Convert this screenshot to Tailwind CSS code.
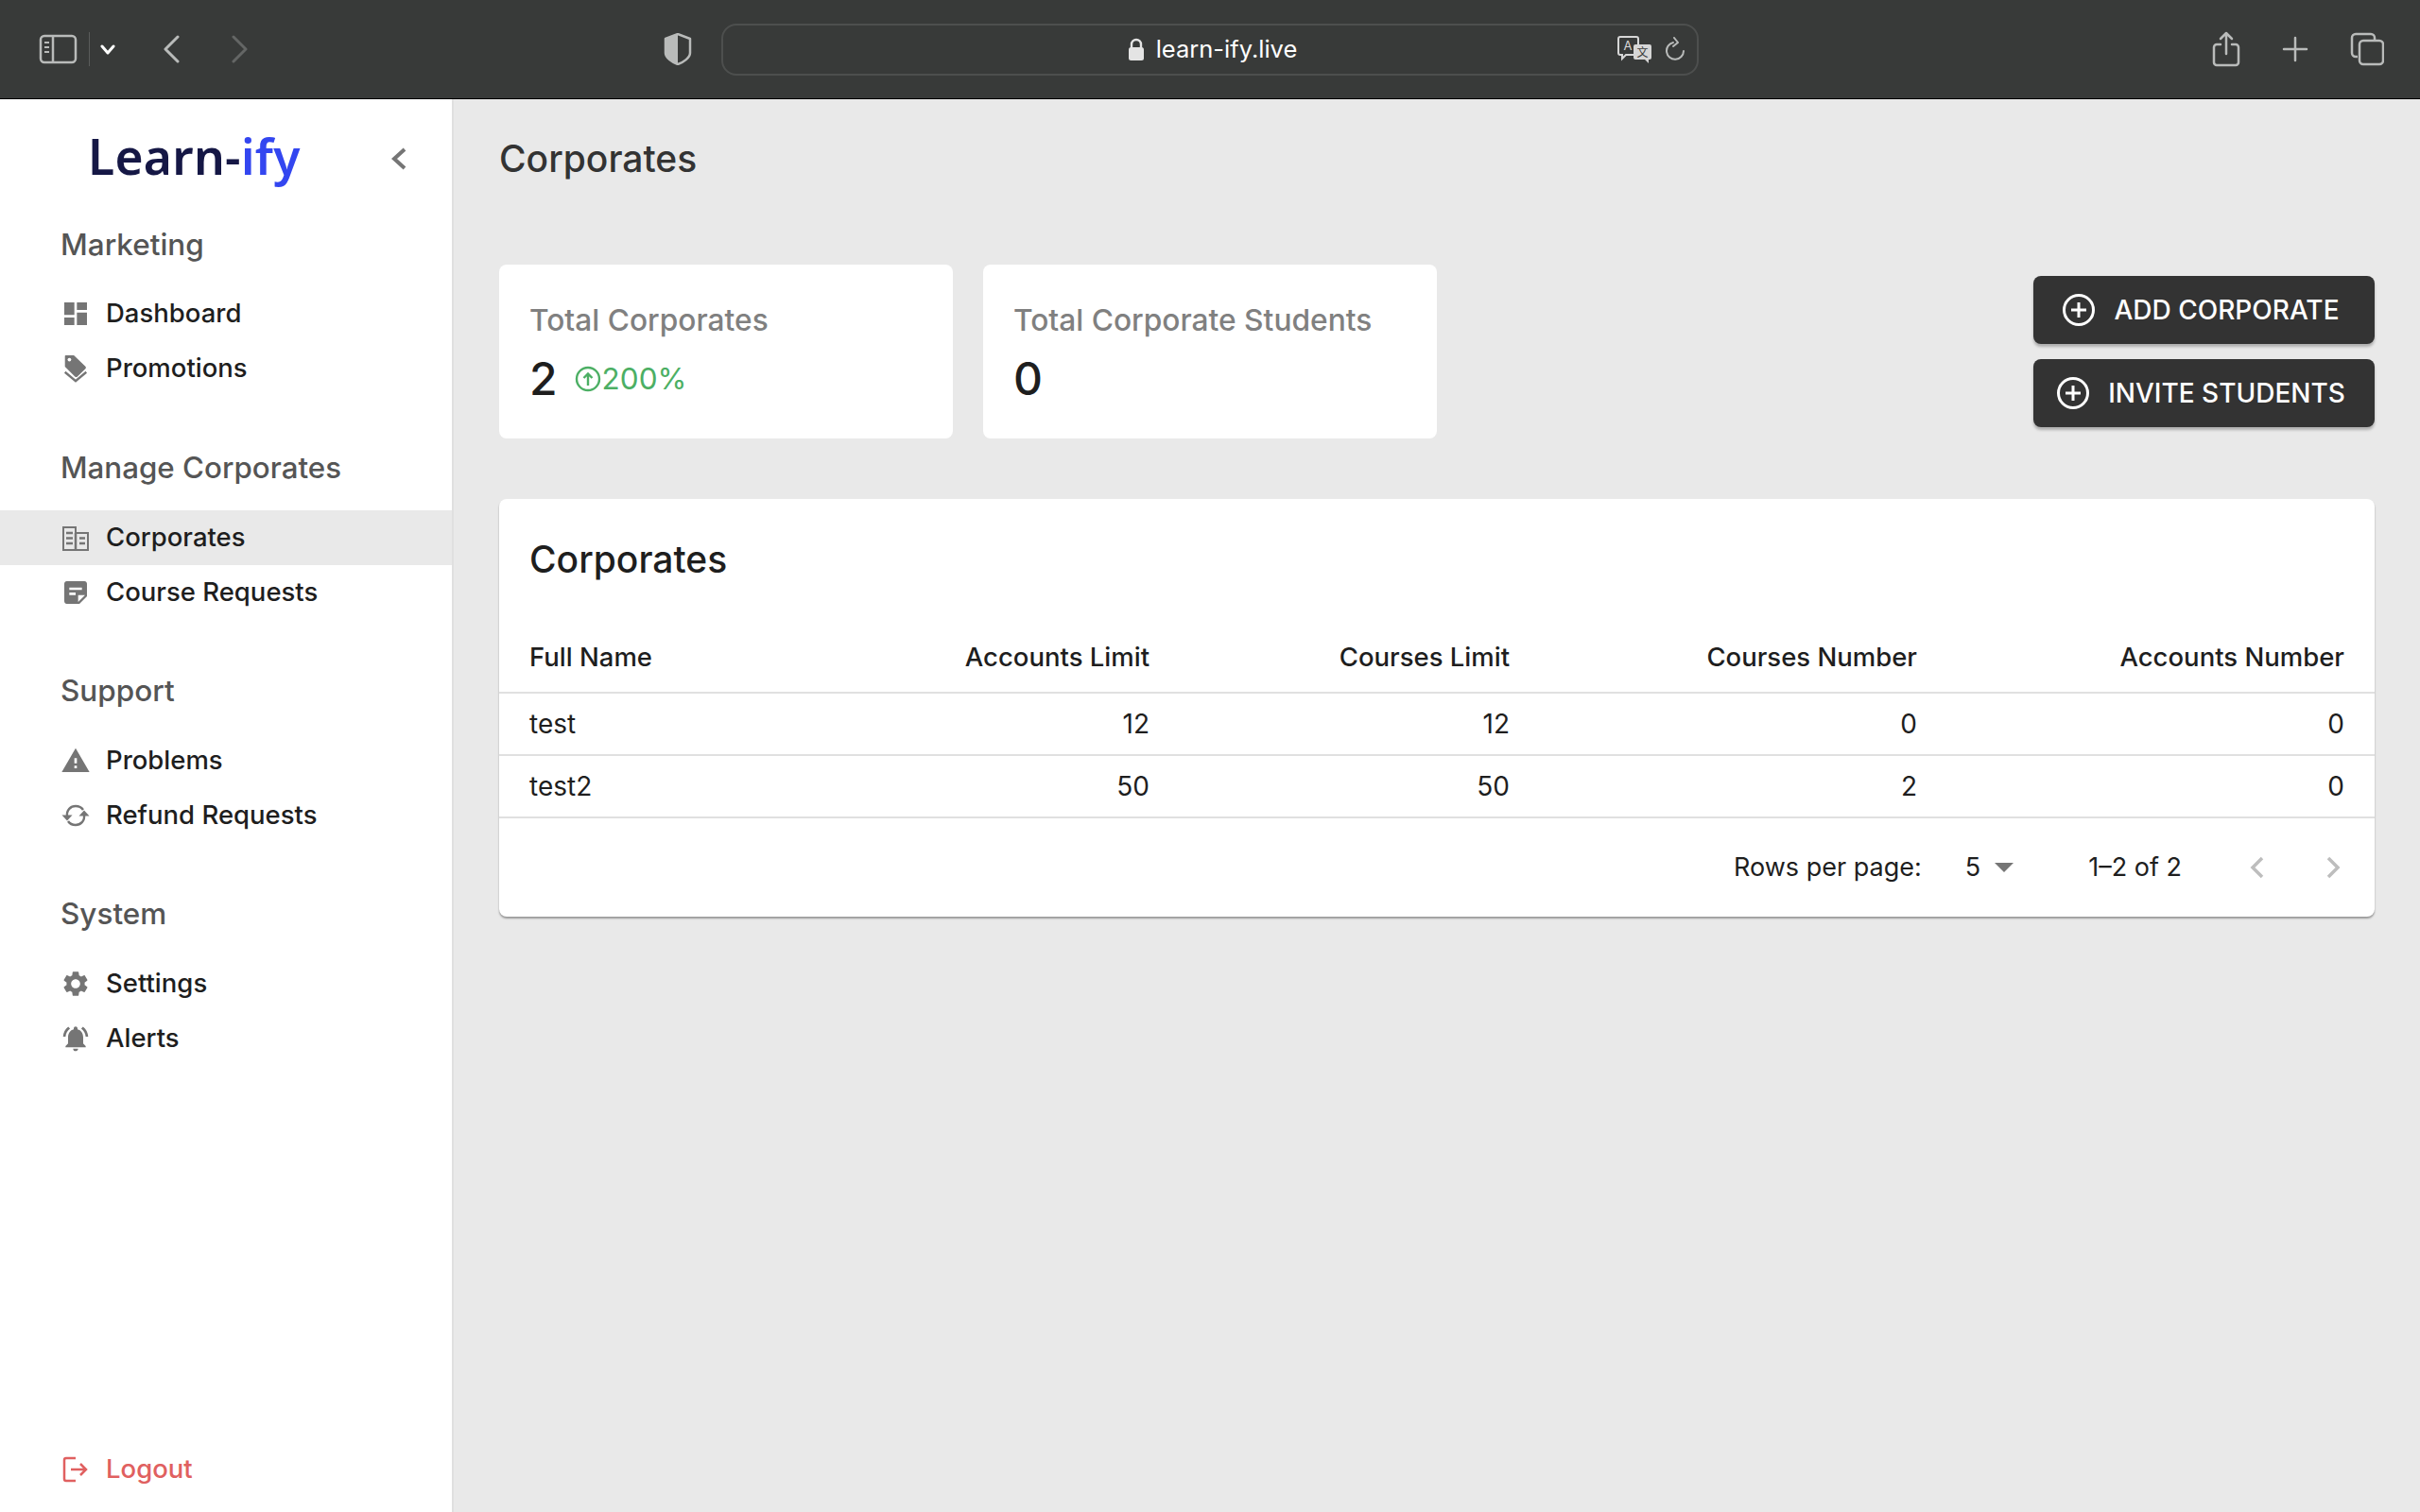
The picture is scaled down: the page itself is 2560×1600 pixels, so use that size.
<!DOCTYPE html>
<html lang="en">
<head>
<meta charset="UTF-8">
<title>Learn-ify</title>
<script src="https://cdn.jsdelivr.net/npm/@tailwindcss/browser@4"></script>
</head>
<body class="w-[2560px] h-[1600px] overflow-hidden bg-[#e9e9e9] font-['Inter',sans-serif] text-[#1e1e1e]">

<!-- browser toolbar -->
<header class="h-[105px] bg-[#383a39] border-b border-black flex items-center text-[#b9bbba]">
  <svg class="ml-[41px] w-[42px] h-[32px]" viewBox="0 0 42 32" fill="none" stroke="currentColor" stroke-width="2.5"><rect x="2" y="2" width="37" height="28" rx="4"/><path d="M15 2v28"/><path d="M6 9h5M6 14h5M6 19h5" stroke-width="2"/></svg>
  <div class="ml-[11px] w-px h-[36px] bg-[#5a5c5b]"></div>
  <svg class="ml-[11px] w-[16px] h-[12px] text-white" viewBox="0 0 16 12" fill="none" stroke="currentColor" stroke-width="3" stroke-linecap="round" stroke-linejoin="round"><path d="M2 3l6 7 6-7"/></svg>
  <svg class="ml-[50px] w-[18px] h-[30px]" viewBox="0 0 18 30" fill="none" stroke="currentColor" stroke-width="3" stroke-linecap="round" stroke-linejoin="round"><path d="M16 2 3 15l13 13"/></svg>
  <svg class="ml-[55px] w-[18px] h-[30px] text-[#646665]" viewBox="0 0 18 30" fill="none" stroke="currentColor" stroke-width="3" stroke-linecap="round" stroke-linejoin="round"><path d="M2 2l13 13L2 28"/></svg>
  <svg class="ml-[439px] w-[30px] h-[34px]" viewBox="0 0 30 34"><path d="M15 1 28 6v15c0 5-7 10-13 12C9 31 2 26 2 21V6z" fill="none" stroke="currentColor" stroke-width="2.5" stroke-linejoin="round"/><path d="M15 1 2 6v15c0 5 7 10 13 12z" fill="currentColor"/></svg>
  <div class="ml-[31px] w-[1034px] h-[55px] rounded-[16px] border-2 border-[#4d4f4e] flex items-center relative">
    <div class="mx-auto pl-[5px] flex items-center gap-[12px] text-white text-[25.5px]">
      <svg class="w-[18px] h-[24px] text-[#e4e4e4]" viewBox="0 0 18 24"><path d="M4 11V7a5 5 0 0 1 10 0v4" fill="none" stroke="currentColor" stroke-width="2.4"/><rect x="1" y="10" width="16" height="14" rx="2.5" fill="currentColor"/></svg>
      <span>learn-ify.live</span>
    </div>
    <svg class="absolute right-[47px] top-[11px] w-[37px] h-[29px] text-[#d6d6d6]" viewBox="0 0 37 29">
      <path d="M3 1h17a2 2 0 0 1 2 2v15a2 2 0 0 1-2 2H9l-4 4v-4H3a2 2 0 0 1-2-2V3a2 2 0 0 1 2-2z" fill="#383a39" stroke="currentColor" stroke-width="2"/>
      <text x="11" y="15" text-anchor="middle" font-size="13" font-family="Inter" fill="currentColor">A</text>
      <path d="M19 9h15a2 2 0 0 1 2 2v12a2 2 0 0 1-2 2h-1v4l-4-4H19a2 2 0 0 1-2-2V11a2 2 0 0 1 2-2z" fill="currentColor"/>
      <text x="26.500" y="22" text-anchor="middle" font-size="12" font-family="Noto Sans CJK SC" fill="#383a39">文</text>
    </svg>
    <svg class="absolute right-[11px] top-[12px] w-[22px] h-[27px]" viewBox="0 0 22 27" fill="none" stroke="currentColor" stroke-width="2" stroke-linecap="round" stroke-linejoin="round"><path d="M8 6a9 9 0 1 0 11 9"/><path d="M9 1l4 5-5 4"/></svg>
  </div>
  <svg class="ml-[543px] w-[30px] h-[38px]" viewBox="0 0 30 38" fill="none" stroke="currentColor" stroke-width="2.500" stroke-linecap="round" stroke-linejoin="round"><path d="M9 14H5a3 3 0 0 0-3 3v16a3 3 0 0 0 3 3h20a3 3 0 0 0 3-3V17a3 3 0 0 0-3-3h-4"/><path d="M15 24V2M9 8l6-6 6 6"/></svg>
  <svg class="ml-[44px] w-[28px] h-[28px]" viewBox="0 0 28 28" fill="none" stroke="currentColor" stroke-width="2.500" stroke-linecap="round"><path d="M14 2v24M2 14h24"/></svg>
  <svg class="ml-[44px] w-[36px] h-[36px]" viewBox="0 0 36 36" fill="none" stroke="currentColor" stroke-width="2.500"><path d="M8 26H6a4 4 0 0 1-4-4V6a4 4 0 0 1 4-4h16a4 4 0 0 1 4 4v2"/><rect x="10" y="9" width="25" height="25" rx="4"/></svg>
</header>

<div class="flex h-[1495px]">
  <!-- sidebar -->
  <aside class="w-[480px] bg-white border-r-2 border-[#e0e0e0] flex flex-col">
    <div class="h-[126px] flex items-center pl-[93px] pr-[46px] justify-between">
      <div class="text-[51.5px] leading-[60px] -mt-[6px] font-semibold font-['Noto_Sans',sans-serif] text-[#151745] tracking-[0.3px]">Learn-<span class="text-[#3346f0]">ify</span></div>
      <svg class="w-[20px] h-[26px] text-[#757575]" viewBox="0 0 20 26" fill="none" stroke="currentColor" stroke-width="4"><path d="M16 3 5 13l11 10"/></svg>
    </div>

    <section>
      <h3 class="h-[54px] pl-[64px] pt-[2px] flex items-center text-[31.5px] text-[#555555] font-medium">Marketing</h3>
      <ul class="mt-[18px] text-[27.5px] font-medium">
        <li class="h-[58px] pl-[64px] flex items-center gap-[16px]">
          <svg class="w-[32px] h-[32px] text-[#757575]" viewBox="0 0 24 24" fill="currentColor"><path d="M3 13h8V3H3v10zm0 8h8v-6H3v6zm10 0h8V11h-8v10zm0-18v6h8V3h-8z"/></svg>
          Dashboard
        </li>
        <li class="h-[58px] pl-[64px] flex items-center gap-[16px]">
          <svg class="w-[32px] h-[32px] text-[#757575]" viewBox="0 0 32 34" fill="currentColor"><path d="M5 2h9l13 12.500a2 2 0 0 1 0 2.800L18 26a2 2 0 0 1-2.800 0L4 15V3a1 1 0 0 1 1-1z"/><circle cx="9" cy="7" r="2" fill="#fff"/><path d="M4 21l12 10 12-10" fill="none" stroke="currentColor" stroke-width="2.500"/></svg>
          Promotions
        </li>
      </ul>
    </section>

    <section class="mt-[49px]">
      <h3 class="h-[54px] pl-[64px] flex items-center text-[31.3px] text-[#555555] font-medium">Manage Corporates</h3>
      <ul class="mt-[18px] text-[27.5px] font-medium">
        <li class="h-[58px] pl-[64px] flex items-center gap-[16px] bg-[#e9e9e9]">
          <svg class="w-[32px] h-[32px] text-[#757575]" viewBox="0 0 32 32" fill="none" stroke="currentColor" stroke-width="2"><path d="M3 5h13v6h13v18H3z"/><path d="M16 11v18M6 11h7M6 16.500h7M6 22h7M20 16.500h6M20 22h6" stroke-width="2.500"/></svg>
          Corporates
        </li>
        <li class="h-[58px] pl-[64px] flex items-center gap-[16px]">
          <svg class="w-[32px] h-[32px] text-[#757575]" viewBox="0 0 24 24" fill="currentColor"><path d="M19 3H4.990C3.890 3 3 3.900 3 5l.010 14c0 1.100.890 2 1.990 2h10l6-6V5c0-1.100-.900-2-2-2zM7 8h10v2H7V8zm5 6H7v-2h5v2zm2 5.500V14h5.500L14 19.500z"/></svg>
          Course Requests
        </li>
      </ul>
    </section>

    <section class="mt-[48px]">
      <h3 class="h-[54px] pl-[64px] flex items-center text-[31.5px] text-[#555555] font-medium">Support</h3>
      <ul class="mt-[18px] text-[27.5px] font-medium">
        <li class="h-[58px] pl-[64px] flex items-center gap-[16px]">
          <svg class="w-[32px] h-[32px] text-[#757575]" viewBox="0 0 24 24" fill="currentColor"><path d="M1 21h22L12 2 1 21zm12-3h-2v-2h2v2zm0-4h-2v-4h2v4z"/></svg>
          Problems
        </li>
        <li class="h-[58px] pl-[64px] flex items-center gap-[16px]">
          <svg class="w-[32px] h-[32px] text-[#757575]" viewBox="0 0 32 32"><path d="M7 17C6 10 11 6 16 6c3 0 6 1 8 4M25 15c1 7-4 11-9 11-3 0-6-1-8-4" fill="none" stroke="currentColor" stroke-width="2.400"/><path d="M1.500 15.500h11l-5.500 6zM30.500 16.500h-11l5.500-6z" fill="currentColor"/></svg>
          Refund Requests
        </li>
      </ul>
    </section>

    <section class="mt-[48px]">
      <h3 class="h-[54px] pl-[64px] flex items-center text-[31.5px] text-[#555555] font-medium">System</h3>
      <ul class="mt-[18px] text-[27.5px] font-medium">
        <li class="h-[58px] pl-[64px] flex items-center gap-[16px]">
          <svg class="w-[32px] h-[32px] text-[#757575]" viewBox="0 0 24 24" fill="currentColor"><path d="M19.140 12.940c.040-.300.060-.610.060-.940 0-.320-.020-.640-.070-.940l2.030-1.580c.180-.140.230-.410.120-.610l-1.920-3.320c-.120-.220-.370-.290-.590-.220l-2.390.960c-.500-.380-1.030-.700-1.620-.940l-.360-2.540c-.040-.240-.240-.410-.480-.410h-3.840c-.240 0-.430.170-.470.410l-.360 2.540c-.590.240-1.130.570-1.620.940l-2.390-.960c-.220-.080-.470 0-.590.220L2.740 8.870c-.120.210-.080.470.120.610l2.030 1.580c-.050.300-.090.630-.090.940s.020.640.070.940l-2.030 1.580c-.180.140-.230.410-.120.610l1.920 3.320c.120.220.370.290.590.220l2.390-.960c.500.380 1.030.700 1.620.940l.360 2.540c.050.240.240.410.480.410h3.840c.240 0 .440-.170.470-.410l.360-2.540c.590-.240 1.130-.560 1.620-.940l2.390.960c.220.080.470 0 .590-.220l1.920-3.320c.120-.220.070-.470-.120-.610l-2.010-1.580zM12 15.600c-1.980 0-3.600-1.620-3.600-3.600s1.620-3.600 3.600-3.600 3.600 1.620 3.600 3.600-1.620 3.600-3.600 3.600z"/></svg>
          Settings
        </li>
        <li class="h-[58px] pl-[64px] flex items-center gap-[16px]">
          <svg class="w-[32px] h-[32px] text-[#757575]" viewBox="0 0 24 24" fill="currentColor"><path d="M7.580 4.080 6.150 2.650C3.750 4.480 2.170 7.300 2.030 10.500h2c.150-2.650 1.510-4.970 3.550-6.420zM19.970 10.500h2c-.150-3.200-1.730-6.020-4.120-7.850l-1.420 1.430c2.020 1.450 3.390 3.770 3.540 6.420zM18 11c0-3.070-1.640-5.640-4.500-6.320V4c0-.830-.670-1.500-1.500-1.500s-1.500.670-1.500 1.500v.680C7.630 5.360 6 7.920 6 11v5l-2 2v1h16v-1l-2-2v-5zm-6 11c.140 0 .270-.010.400-.040.650-.140 1.180-.580 1.440-1.180.100-.240.150-.500.150-.780h-4c.010 1.100.900 2 2.010 2z"/></svg>
          Alerts
        </li>
      </ul>
    </section>

    <div class="mt-auto mb-[16px] h-[58px] pl-[64px] flex items-center gap-[16px] text-[27.5px] font-medium text-[#e06060]">
      <svg class="w-[32px] h-[32px]" viewBox="0 0 32 32" fill="none" stroke="currentColor" stroke-width="2.500"><path d="M16 4H6a2 2 0 0 0-2 2v20a2 2 0 0 0 2 2h10"/><path d="M11 16h16M21 10l6 6-6 6"/></svg>
      Logout
    </div>
  </aside>

  <!-- main -->
  <main class="flex-1 px-[48px]">
    <h1 class="h-[126px] flex items-center text-[39px] text-[#333333] font-medium">Corporates</h1>

    <div class="mt-[49px] flex items-start">
      <div class="w-[480px] h-[184px] bg-white rounded-[8px] pl-[32px] pt-[34px]">
        <div class="text-[31.7px] leading-[50px] font-medium text-[#808080]">Total Corporates</div>
        <div class="mt-[7px] flex items-center">
          <span class="text-[48px] leading-[60px] font-medium">2</span>
          <svg class="ml-[18px] w-[28px] h-[28px] text-[#4caf64]" viewBox="0 0 28 28" fill="none" stroke="currentColor" stroke-width="2.400"><circle cx="14" cy="14" r="12"/><path d="M14 21V9M9.500 13l4.500-4.500 4.500 4.500"/></svg>
          <span class="ml-[1px] text-[31.5px] text-[#4caf64]">200%</span>
        </div>
      </div>
      <div class="ml-[32px] w-[480px] h-[184px] bg-white rounded-[8px] pl-[32px] pt-[34px]">
        <div class="text-[31.7px] leading-[50px] font-medium text-[#808080]">Total Corporate Students</div>
        <div class="mt-[7px] text-[48px] leading-[60px] font-medium">0</div>
      </div>
      <div class="ml-auto mt-[12px] flex flex-col gap-[16px]">
        <button class="w-[361px] h-[72px] rounded-[8px] bg-[#333333] text-white text-[28px] font-medium flex items-center justify-center gap-[19px] pr-[7px] shadow-[0_3px_3px_rgba(0,0,0,0.25)]">
          <svg class="w-[36px] h-[36px]" viewBox="0 0 36 36" fill="none" stroke="currentColor" stroke-width="3"><circle cx="18" cy="18" r="15.500"/><path d="M18 10v16M10 18h16"/></svg>
          ADD CORPORATE
        </button>
        <button class="w-[361px] h-[72px] rounded-[8px] bg-[#333333] text-white text-[28px] font-medium flex items-center justify-center gap-[19px] pr-[7px] shadow-[0_3px_3px_rgba(0,0,0,0.25)]">
          <svg class="w-[36px] h-[36px]" viewBox="0 0 36 36" fill="none" stroke="currentColor" stroke-width="3"><circle cx="18" cy="18" r="15.500"/><path d="M18 10v16M10 18h16"/></svg>
          INVITE STUDENTS
        </button>
      </div>
    </div>

    <section class="mt-[64px] h-[442px] bg-white rounded-[8px] shadow-[0_2px_2px_rgba(0,0,0,0.35)]">
      <h2 class="h-[128px] pl-[32px] flex items-center text-[39px] font-medium">Corporates</h2>
      <div class="h-[78px] pt-[3px] grid grid-cols-[360px_360px_381px_431px_452px] items-center text-[27.5px] font-medium border-b-2 border-[#e0e0e0]">
        <div class="pl-[32px]">Full Name</div>
        <div class="pr-[32px] text-right">Accounts Limit</div>
        <div class="pr-[32px] text-right">Courses Limit</div>
        <div class="pr-[32px] text-right">Courses Number</div>
        <div class="pr-[32px] text-right">Accounts Number</div>
      </div>
      <div class="h-[66px] grid grid-cols-[360px_360px_381px_431px_452px] items-center text-[28px] border-b-2 border-[#e0e0e0]">
        <div class="pl-[32px]">test</div>
        <div class="pr-[32px] text-right">12</div>
        <div class="pr-[32px] text-right">12</div>
        <div class="pr-[32px] text-right">0</div>
        <div class="pr-[32px] text-right">0</div>
      </div>
      <div class="h-[66px] grid grid-cols-[360px_360px_381px_431px_452px] items-center text-[28px] border-b-2 border-[#e0e0e0]">
        <div class="pl-[32px]">test2</div>
        <div class="pr-[32px] text-right">50</div>
        <div class="pr-[32px] text-right">50</div>
        <div class="pr-[32px] text-right">2</div>
        <div class="pr-[32px] text-right">0</div>
      </div>
      <div class="h-[104px] flex items-center justify-end pr-[36px] text-[27px]">
        <span>Rows per page:</span>
        <span class="ml-[46px]">5</span>
        <svg class="ml-[15px] w-[20px] h-[10px] text-[#757575]" viewBox="0 0 20 10" fill="currentColor"><path d="M0 0h20L10 10z"/></svg>
        <span class="ml-[79px]">1–2 of 2</span>
        <svg class="ml-[72px] w-[15px] h-[24px] text-[#bdbdbd]" viewBox="0 0 15 24" fill="none" stroke="currentColor" stroke-width="3.500"><path d="M13 2 3 12l10 10"/></svg>
        <svg class="ml-[66px] w-[15px] h-[24px] text-[#bdbdbd]" viewBox="0 0 15 24" fill="none" stroke="currentColor" stroke-width="3.500"><path d="M2 2l10 10L2 22"/></svg>
      </div>
    </section>
  </main>
</div>
</body>
</html>
